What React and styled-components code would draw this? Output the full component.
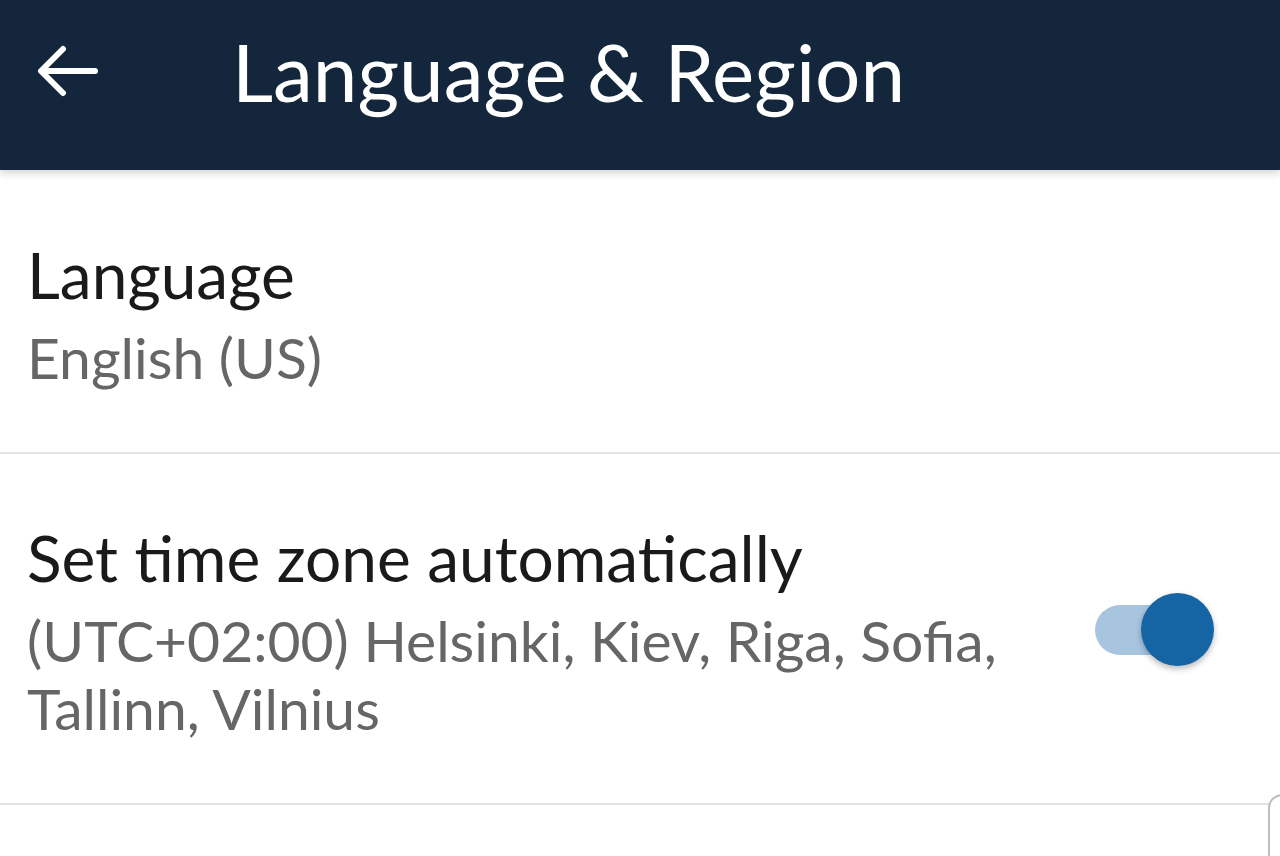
import styled, { createGlobalStyle } from 'styled-components';

const Global = createGlobalStyle`
  html, body {
    margin: 0;
    padding: 0;
    background: #ffffff;
    font-family: Lato, "Noto Sans", sans-serif;
    overflow: hidden;
  }
`;

const Page = styled.div`
  width: 1280px;
  height: 856px;
  position: relative;
  overflow: hidden;
  background: #fff;
`;

const Header = styled.header`
  height: 170px;
  box-sizing: border-box;
  padding-bottom: 28px;
  background: #13263b;
  display: flex;
  align-items: center;
  box-shadow: 0 3px 8px rgba(0, 0, 0, 0.18);
  position: relative;
  z-index: 1;
`;

const BackButton = styled.button`
  width: 136px;
  height: 60px;
  border: 0;
  background: none;
  padding: 0 0 0 37px;
  display: flex;
  align-items: center;
  color: #fff;
  cursor: pointer;
`;

const Title = styled.h1`
  margin: 0 0 0 96px;
  color: #fff;
  font-weight: 400;
  font-size: 80px;
  line-height: 1;
`;

const List = styled.div`
  display: flex;
  flex-direction: column;
`;

const Row = styled.div`
  display: flex;
  align-items: center;
  justify-content: space-between;
  padding: ${(p) => p.$pad};
  border-bottom: 2px solid #e2e2e2;
`;

const Texts = styled.div`
  display: flex;
  flex-direction: column;
  gap: 8px;
`;

const Label = styled.div`
  color: #1a1a1a;
  font-size: 64px;
  line-height: 80px;
`;

const Value = styled.div`
  color: #666666;
  font-size: 57px;
  line-height: 68px;
  max-width: ${(p) => p.$max || 'none'};
`;

const Switch = styled.div`
  position: relative;
  width: 119px;
  height: 76px;
  margin-right: 66px;
  display: flex;
  align-items: center;
`;

const Track = styled.div`
  width: 84px;
  height: 50px;
  border-radius: 25px;
  background: #a8c5e0;
`;

const Thumb = styled.div`
  position: absolute;
  right: 0;
  top: 1px;
  width: 73px;
  height: 73px;
  border-radius: 50%;
  background: #1565a5;
  box-shadow: 0 3px 6px rgba(0, 0, 0, 0.28);
`;

const CornerEdge = styled.div`
  position: absolute;
  left: 1268px;
  top: 794px;
  width: 60px;
  height: 100px;
  border: 2px solid #bdbdbd;
  border-radius: 14px;
  background: #fff;
`;

export default function App() {
  return (
    <Page>
      <Global />
      <Header>
        <BackButton aria-label="Back">
          <svg width="62" height="54" viewBox="0 0 62 54" fill="none" stroke="#fff" strokeWidth="6" strokeLinecap="round" strokeLinejoin="round">
            <path d="M58 27H5" />
            <path d="M26 5L4 27L26 49" />
          </svg>
        </BackButton>
        <Title>Language &amp; Region</Title>
      </Header>
      <List>
        <Row $pad="65px 27px 61px">
          <Texts>
            <Label>Language</Label>
            <Value>English (US)</Value>
          </Texts>
        </Row>
        <Row $pad="64px 0 61px 27px">
          <Texts>
            <Label>Set time zone automatically</Label>
            <Value $max="1000px">(UTC+02:00) Helsinki, Kiev, Riga, Sofia, Tallinn, Vilnius</Value>
          </Texts>
          <Switch>
            <Track />
            <Thumb />
          </Switch>
        </Row>
      </List>
      <CornerEdge />
    </Page>
  );
}
